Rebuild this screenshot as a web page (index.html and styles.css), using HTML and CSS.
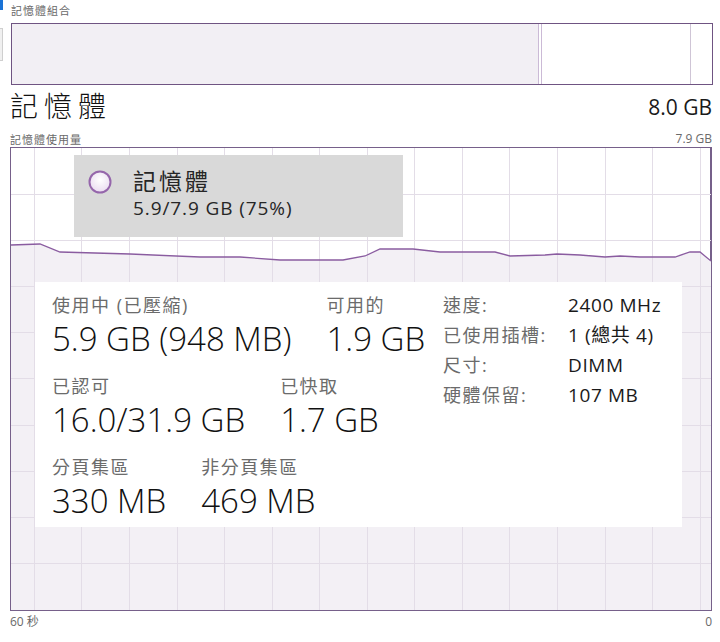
FILE: index.html
```html
<!DOCTYPE html>
<html lang="zh-Hant">
<head>
<meta charset="utf-8">
<title>記憶體</title>
<link rel="stylesheet" href="styles.css">
</head>
<body>
<div class="edge-mark"></div>
<div class="edge-box"></div>
<main class="page">
  <div class="caption">記憶體組合</div>
  <div class="composition">
    <div class="seg seg-used"></div>
    <div class="seg seg-mod"></div>
    <div class="seg seg-standby"></div>
    <div class="seg seg-free"></div>
  </div>
  <div class="title-row">
    <h1 class="title">記憶體</h1>
    <span class="total">8.0 GB</span>
  </div>
  <div class="sub-row">
    <span class="sub-label">記憶體使用量</span>
    <span class="sub-value">7.9 GB</span>
  </div>
  <div class="graph">
    <svg class="chart" width="700" height="462" viewBox="0 0 700 462">
      <path class="area" d="M0,97 L29,96 L49,104 L119,106 L189,109 L229,109 L269,112 L332,112 L354,108 L369,101 L402,101 L429,104 L484,104 L499,108 L534,107 L546,106 L569,107 L594,109 L609,108 L629,109 L664,109 L679,104 L689,104 L700,113 L700,462 L0,462 Z"/>
      <g class="grid">
        <path d="M23.5,0V462 M70.5,0V462 M118.5,0V462 M166.5,0V462 M213.5,0V462 M261.5,0V462 M308.5,0V462 M356.5,0V462 M403.5,0V462 M451.5,0V462 M498.5,0V462 M546.5,0V462 M594.5,0V462 M641.5,0V462 M689.5,0V462"/>
        <path d="M0,46.5H700 M0,92.5H700 M0,138.5H700 M0,184.5H700 M0,230.5H700 M0,277.5H700 M0,323.5H700 M0,369.5H700 M0,415.5H700"/>
      </g>
      <path class="line" d="M0,97 L29,96 L49,104 L119,106 L189,109 L229,109 L269,112 L332,112 L354,108 L369,101 L402,101 L429,104 L484,104 L499,108 L534,107 L546,106 L569,107 L594,109 L609,108 L629,109 L664,109 L679,104 L689,104 L700,113"/>
    </svg>
    <div class="tip">
      <svg class="tip-dot" width="24" height="24" viewBox="0 0 24 24">
        <defs>
          <radialGradient id="dotfill" cx="50%" cy="40%" r="60%">
            <stop offset="0%" stop-color="#ffffff"/>
            <stop offset="100%" stop-color="#eadcf0"/>
          </radialGradient>
        </defs>
        <circle cx="12" cy="12" r="10.5" fill="url(#dotfill)" stroke="#9566ab" stroke-width="2"/>
      </svg>
      <div class="tip-text">
        <div class="tip-title">記憶體</div>
        <div class="tip-value">5.9/7.9 GB (75%)</div>
      </div>
    </div>
    <div class="details">
      <div class="stats">
        <div class="stat-row">
          <div class="stat">
            <div class="label">使用中 (已壓縮)</div>
            <div class="value">5.9 GB (948 MB)</div>
          </div>
          <div class="stat">
            <div class="label">可用的</div>
            <div class="value">1.9 GB</div>
          </div>
        </div>
        <div class="stat-row">
          <div class="stat">
            <div class="label">已認可</div>
            <div class="value">16.0/31.9 GB</div>
          </div>
          <div class="stat">
            <div class="label">已快取</div>
            <div class="value">1.7 GB</div>
          </div>
        </div>
        <div class="stat-row">
          <div class="stat">
            <div class="label">分頁集區</div>
            <div class="value">330 MB</div>
          </div>
          <div class="stat">
            <div class="label">非分頁集區</div>
            <div class="value">469 MB</div>
          </div>
        </div>
      </div>
      <dl class="specs">
        <dt>速度:</dt><dd>2400 MHz</dd>
        <dt>已使用插槽:</dt><dd>1 (總共 4)</dd>
        <dt>尺寸:</dt><dd>DIMM</dd>
        <dt>硬體保留:</dt><dd>107 MB</dd>
      </dl>
    </div>
  </div>
  <div class="axis">
    <span>60 秒</span>
    <span>0</span>
  </div>
</main>
</body>
</html>
```
FILE: styles.css
```css
* { box-sizing: border-box; }

html, body {
  margin: 0;
  padding: 0;
  background: #ffffff;
}

body {
  width: 720px;
  height: 642px;
  overflow: hidden;
  position: relative;
  font-family: "Open Sans", "Noto Sans CJK TC", sans-serif;
  color: #1a1a1a;
}

.edge-mark {
  position: absolute;
  left: 0;
  top: 0;
  width: 3px;
  height: 10px;
  background: #1a73d6;
}

.edge-box {
  position: absolute;
  left: 0;
  top: 28px;
  width: 3px;
  height: 33px;
  background: #f0f0f0;
  border: 1px solid #cfcfcf;
  border-left: none;
}

.page {
  padding: 3px 8px 0 10px;
  display: flex;
  flex-direction: column;
}

.caption {
  font-family: "Noto Sans CJK TC", sans-serif;
  font-size: 11px;
  line-height: 14px;
  color: #6a6a6a;
  letter-spacing: 1px;
  padding-left: 1px;
}

.composition {
  margin-top: 6px;
  margin-left: 1px;
  margin-right: -1px;
  height: 62px;
  border: 1px solid #6f5482;
  display: flex;
}

.seg { height: 100%; }

.seg-used {
  width: 527px;
  background: #f2eff4;
  border-right: 1px solid #cbbad6;
}

.seg-mod {
  width: 3px;
  background: #ffffff;
  border-right: 1px solid #cbbad6;
}

.seg-standby {
  width: 149px;
  background: #ffffff;
  border-right: 1px solid #cfc5d6;
}

.seg-free {
  flex: 1;
  background: #ffffff;
}

.title-row {
  margin-top: 3px;
  display: flex;
  justify-content: space-between;
  align-items: flex-end;
  height: 33px;
}

.title {
  margin: 0;
  font-family: "Noto Sans CJK TC", sans-serif;
  font-weight: 300;
  font-size: 28px;
  line-height: 32px;
  letter-spacing: 6px;
  color: #111111;
}

.total {
  font-family: "Open Sans", sans-serif;
  font-weight: 400;
  font-size: 21px;
  line-height: 26px;
  color: #1a1a1a;
  margin-bottom: 1px;
}

.sub-row {
  margin-top: 9px;
  display: flex;
  justify-content: space-between;
  align-items: center;
  height: 17px;
}

.sub-label {
  font-family: "Noto Sans CJK TC", sans-serif;
  font-size: 11px;
  color: #6a6a6a;
  letter-spacing: 1px;
}

.sub-value {
  font-size: 12px;
  color: #6a6a6a;
}

.graph {
  position: relative;
  width: 702px;
  height: 464px;
  border: 1px solid #76608a;
  border-right-width: 2px;
  border-bottom-width: 2px;
}

.chart {
  display: block;
}

.area {
  fill: #f3f0f5;
}

.grid path {
  stroke: #e3dde7;
  stroke-width: 1;
  fill: none;
}

.line {
  fill: none;
  stroke: #8a5ca0;
  stroke-width: 1.3;
}

.tip {
  position: absolute;
  left: 63px;
  top: 7px;
  width: 329px;
  height: 82px;
  background: #d9d9d9;
  display: flex;
  align-items: flex-start;
  padding-left: 14px;
}

.tip-dot {
  margin-top: 15px;
  flex: none;
}

.tip-text {
  margin-left: 21px;
  padding-top: 10px;
}

.tip-title {
  font-family: "Noto Sans CJK TC", sans-serif;
  font-size: 23px;
  line-height: 30px;
  letter-spacing: 3px;
  color: #262626;
}

.tip-value {
  margin-top: 1px;
  font-size: 19px;
  line-height: 24px;
  letter-spacing: 0.9px;
  color: #262626;
}

.details {
  position: absolute;
  left: 24px;
  top: 134px;
  width: 647px;
  height: 245px;
  background: #ffffff;
  display: flex;
  padding: 12px 0 0 17px;
}

.stats {
  width: 391px;
  display: flex;
  flex-direction: column;
  gap: 17px;
}

.stat-row {
  display: flex;
  gap: 35px;
}

.label {
  font-family: "Open Sans", "Noto Sans CJK TC", sans-serif;
  font-size: 18px;
  line-height: 22px;
  letter-spacing: 1.5px;
  color: #6b6b6b;
  white-space: nowrap;
}

.value {
  margin-top: 3px;
  font-size: 33px;
  font-weight: 300;
  line-height: 39px;
  color: #111111;
  white-space: nowrap;
}

.specs {
  margin: -4px 0 0 0;
  display: grid;
  grid-template-columns: 125px auto;
  align-content: start;
  font-size: 18px;
  line-height: 30px;
}

.specs dt {
  font-family: "Open Sans", "Noto Sans CJK TC", sans-serif;
  letter-spacing: 1.5px;
  color: #6b6b6b;
}

.specs dd {
  margin: 0;
  font-family: "Open Sans", "Noto Sans CJK TC", sans-serif;
  font-size: 19px;
  letter-spacing: 0.6px;
  color: #1a1a1a;
  white-space: nowrap;
}

.axis {
  margin-top: 3px;
  display: flex;
  justify-content: space-between;
  font-family: "Open Sans", "Noto Sans CJK TC", sans-serif;
  font-size: 12px;
  line-height: 16px;
  color: #6a6a6a;
}
```
